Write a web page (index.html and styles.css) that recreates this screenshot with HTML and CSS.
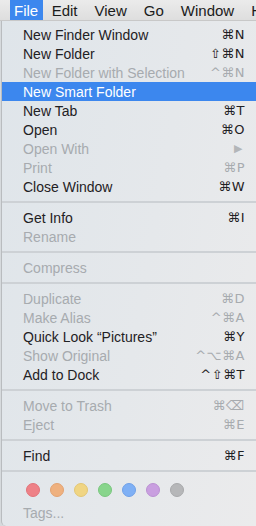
FILE: index.html
```html
<!DOCTYPE html>
<html lang="en">
<head>
    <meta charset="UTF-8">
    <title>Finder File Menu</title>
    <link rel="stylesheet" href="styles.css">
</head>
<body>
    <div class="menubar">
        <span class="menubar-item active">File</span>
        <span class="menubar-item">Edit</span>
        <span class="menubar-item">View</span>
        <span class="menubar-item">Go</span>
        <span class="menubar-item">Window</span>
        <span class="menubar-item">Help</span>
    </div>

    <div class="menu">
        <div class="item"><span>New Finder Window</span><span class="key">⌘N</span></div>
        <div class="item"><span>New Folder</span><span class="key">⇧⌘N</span></div>
        <div class="item disabled"><span>New Folder with Selection</span><span class="key">^⌘N</span></div>
        <div class="item selected"><span>New Smart Folder</span><span class="key"></span></div>
        <div class="item"><span>New Tab</span><span class="key">⌘T</span></div>
        <div class="item"><span>Open</span><span class="key">⌘O</span></div>
        <div class="item disabled"><span>Open With</span><span class="key arrow">▶</span></div>
        <div class="item disabled"><span>Print</span><span class="key">⌘P</span></div>
        <div class="item"><span>Close Window</span><span class="key">⌘W</span></div>
        <div class="separator"></div>
        <div class="item"><span>Get Info</span><span class="key">⌘I</span></div>
        <div class="item disabled"><span>Rename</span><span class="key"></span></div>
        <div class="separator"></div>
        <div class="item disabled"><span>Compress</span><span class="key"></span></div>
        <div class="separator"></div>
        <div class="item disabled"><span>Duplicate</span><span class="key">⌘D</span></div>
        <div class="item disabled"><span>Make Alias</span><span class="key">^⌘A</span></div>
        <div class="item"><span>Quick Look “Pictures”</span><span class="key">⌘Y</span></div>
        <div class="item disabled"><span>Show Original</span><span class="key">^⌥⌘A</span></div>
        <div class="item"><span>Add to Dock</span><span class="key">^⇧⌘T</span></div>
        <div class="separator"></div>
        <div class="item disabled"><span>Move to Trash</span><span class="key">⌘⌫</span></div>
        <div class="item disabled"><span>Eject</span><span class="key">⌘E</span></div>
        <div class="separator"></div>
        <div class="item"><span>Find</span><span class="key">⌘F</span></div>
        <div class="separator"></div>
        <div class="tags">
            <span class="dot red"></span>
            <span class="dot orange"></span>
            <span class="dot yellow"></span>
            <span class="dot green"></span>
            <span class="dot blue"></span>
            <span class="dot purple"></span>
            <span class="dot gray"></span>
        </div>
        <div class="item disabled"><span>Tags...</span><span class="key"></span></div>
    </div>
</body>
</html>
```

FILE: styles.css
```css
:root {
    --text: #1f2124;
    --disabled: #a7abaf;
    --highlight: #3c87ee;
    --line: #cdd1d5;
}

body {
    margin: 0;
    width: 256px;
    height: 526px;
    overflow: hidden;
    font-family: 'Liberation Sans', Arial, sans-serif;
    font-size: 14px;
    color: var(--text);
    background: #d6dadd;
}

.menubar {
    height: 21px;
    display: flex;
    align-items: stretch;
    background: linear-gradient(#ebebeb, #dedede);
    border-bottom: 1px solid #c8c8c8;
    box-sizing: border-box;
    padding-left: 10px;
    white-space: nowrap;
    font-size: 15px;
}

.menubar-item {
    display: flex;
    align-items: center;
    padding: 0 8.5px;
    color: #1b1b1b;
}

.menubar-item.active {
    background: var(--highlight);
    color: #fff;
    padding: 0 5px 0 4px;
}

.menu {
    margin-left: 1px;
    height: 505px;
    padding-top: 4px;
    box-sizing: border-box;
    background: linear-gradient(100deg, #dfe5ea 0%, #e5e8eb 55%, #ebebec 100%);
    border-left: 1px solid #b9bcbf;
    border-bottom-left-radius: 5px;
}

.item {
    height: 19px;
    display: flex;
    align-items: center;
    justify-content: space-between;
    padding: 0 11px 0 21px;
    white-space: nowrap;
}

.item.disabled {
    color: var(--disabled);
}

.item.selected {
    background: var(--highlight);
    color: #fff;
}

.key {
    font-family: 'DejaVu Sans', 'Liberation Sans', sans-serif;
    font-size: 13px;
    letter-spacing: 0.5px;
}

.key.arrow {
    font-size: 11px;
    color: #b3b6b9;
    margin-right: 2px;
}

.separator {
    height: 12px;
    display: flex;
    align-items: center;
}

.separator::after {
    content: '';
    flex: 1;
    height: 2px;
    background: var(--line);
}

.tags {
    height: 26px;
    display: flex;
    align-items: center;
    gap: 10px;
    padding-left: 24px;
}

.dot {
    width: 14px;
    height: 14px;
    border-radius: 50%;
    box-sizing: border-box;
}

.red { background: #ee8187; border: 1px solid #e2737a; }
.orange { background: #efb17f; border: 1px solid #e3a372; }
.yellow { background: #f0d583; border: 1px solid #e3c774; }
.green { background: #88d58c; border: 1px solid #79c77e; }
.blue { background: #7fb0f5; border: 1px solid #70a1e8; }
.purple { background: #c99fe0; border: 1px solid #bb91d3; }
.gray { background: #b6b7b9; border: 1px solid #a8a9ab; }
```
